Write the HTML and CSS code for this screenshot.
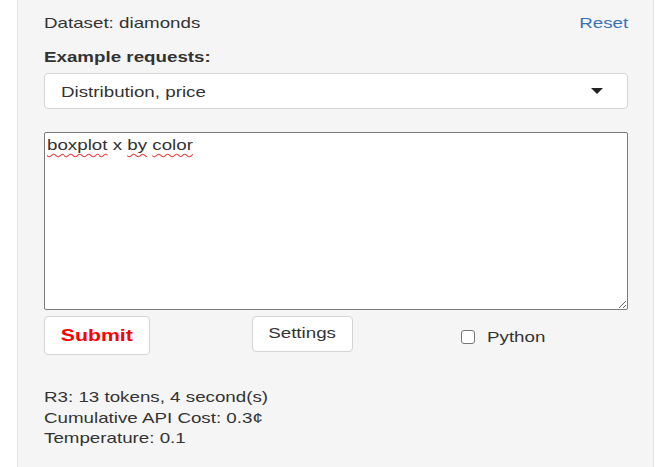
FILE: index.html
```html
<!DOCTYPE html>
<html>
<head>
<meta charset="utf-8">
<link rel="stylesheet" href="styles.css">
</head>
<body>
<div class="well">
  <div class="head-row">
    <span class="wide">Dataset: diamonds</span>
    <a class="reset wide-r" href="#">Reset</a>
  </div>
  <div class="label"><span class="wide">Example requests:</span></div>
  <div class="select">
    <span class="wide">Distribution, price</span>
    <span class="caret"></span>
  </div>
  <div class="textarea"><span class="wide"><span class="sp">boxplot</span> x <span class="sp">by</span> <span class="sp">color</span></span></div>
  <div class="actions">
    <button class="btn submit"><span class="wide-c">Submit</span></button>
    <button class="btn settings"><span class="wide-c">Settings</span></button>
    <label class="check"><span class="box"></span><span class="wide">Python</span></label>
  </div>
  <div class="stats">
    <div class="wide">R3: 13 tokens, 4 second(s)</div>
    <div class="wide">Cumulative API Cost: 0.3¢</div>
    <div class="wide">Temperature: 0.1</div>
  </div>
</div>
</body>
</html>
```

FILE: styles.css
```css
html, body {
  margin: 0;
  padding: 0;
  background: #ffffff;
  overflow: hidden;
}
body {
  font-family: "Liberation Sans", Arial, sans-serif;
  font-size: 15px;
  color: #333333;
  padding-left: 17px;
}
.wide, .wide-r, .wide-c {
  display: inline-block;
  transform: scaleX(1.25);
  transform-origin: 0 50%;
}
.wide-r {
  transform-origin: 100% 50%;
}
.wide-c {
  transform-origin: 50% 50%;
}
.stats {
  display: flex;
  flex-direction: column;
  align-items: flex-start;
  margin-top: 32px;
  line-height: 20.5px;
}
.well {
  box-sizing: border-box;
  width: 637px;
  height: 467px;
  background: #f5f5f5;
  border-left: 1px solid #e3e3e3;
  border-right: 1px solid #e3e3e3;
  padding: 13px 25px 0 26px;
}
.head-row {
  display: flex;
  justify-content: space-between;
  line-height: 20px;
}
.reset {
  color: #3a74b0;
  text-decoration: none;
}
.label {
  font-weight: bold;
  line-height: 20px;
  margin-top: 14px;
}
.select {
  box-sizing: border-box;
  margin-top: 6px;
  height: 36px;
  background: #fff;
  border: 1px solid #d4d4d4;
  border-radius: 4px;
  display: flex;
  align-items: center;
  justify-content: space-between;
  padding: 0 24px 0 16px;
}
.caret {
  width: 0;
  height: 0;
  border-left: 6px solid transparent;
  border-right: 6px solid transparent;
  border-top: 6px solid #222;
}
.textarea {
  box-sizing: border-box;
  margin-top: 23px;
  height: 178px;
  background: #fff;
  border: 1px solid #7a7a7a;
  border-radius: 2px;
  padding: 2px 2px;
  line-height: 19px;
  overflow: auto;
  resize: vertical;
}
.sp {
  text-decoration: underline wavy #e84040;
  text-decoration-thickness: 1px;
  text-underline-offset: 3px;
}
.actions {
  display: flex;
  align-items: flex-start;
  margin-top: 6px;
}
.btn {
  font-family: "Liberation Sans", Arial, sans-serif;
  background: #fff;
  border: 1px solid #d4d4d4;
  border-radius: 4px;
  color: #333;
  cursor: pointer;
  padding: 0;
}
.submit {
  width: 106px;
  height: 39px;
  color: #ff0000;
  font-weight: bold;
  font-size: 17px;
}
.settings {
  margin-left: 102px;
  width: 101px;
  height: 36px;
  font-size: 15px;
  padding-bottom: 3px;
}
.check {
  display: flex;
  align-items: center;
  margin-left: 108px;
  margin-top: 11px;
  font-size: 15px;
  line-height: 20px;
}
.box {
  box-sizing: border-box;
  width: 14px;
  height: 14px;
  border: 1px solid #767676;
  border-radius: 3px;
  background: #fff;
  margin-right: 12px;
}
```
